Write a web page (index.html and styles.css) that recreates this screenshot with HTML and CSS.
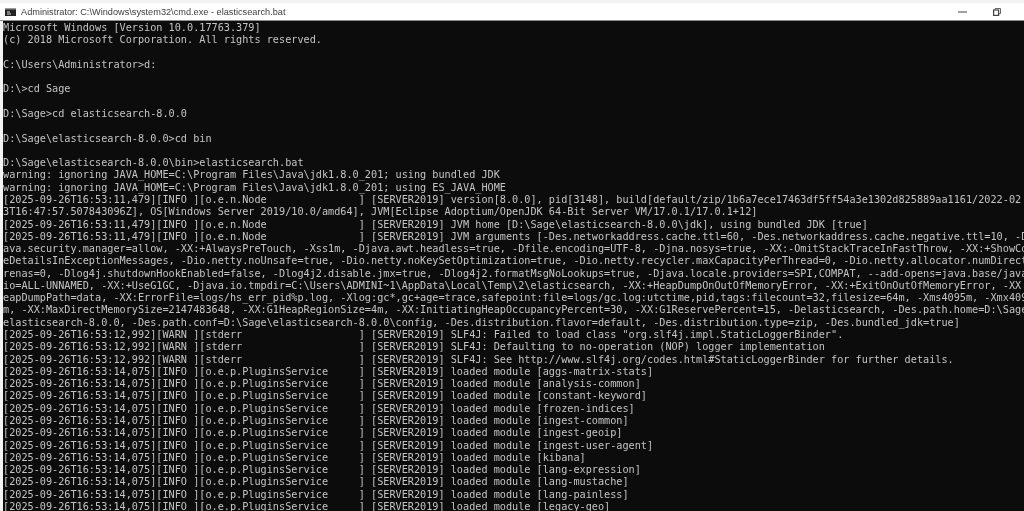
FILE: index.html
```html
<!DOCTYPE html>
<html lang="en">
<head>
<meta charset="utf-8">
<title>elasticsearch.bat</title>
<link rel="stylesheet" href="styles.css">
</head>
<body>
<div class="window">
  <header class="titlebar">
    <svg class="app-icon" width="11" height="8" viewBox="0 0 11 8"><rect width="11" height="8" fill="#222"/><rect width="11" height="1.5" fill="#9a9a9a"/><path d="M2 3.5h3v1H2zM2 5.5h4v1H2z" fill="#ddd"/></svg>
    <span class="title">Administrator: C:\Windows\system32\cmd.exe - elasticsearch.bat</span>
    <div class="controls">
      <span class="minimize"></span>
      <svg class="restore" width="8" height="8" viewBox="0 0 8 8"><path d="M2.2 1.8V.5h5.3v5.2H6" fill="none" stroke="#666" stroke-width="1"/><rect x=".6" y="2" width="5" height="5.4" fill="none" stroke="#444" stroke-width="1.2"/></svg>
    </div>
  </header>
  <pre class="console">Microsoft Windows [Version 10.0.17763.379]
(c) 2018 Microsoft Corporation. All rights reserved.

C:\Users\Administrator&gt;d:

D:\&gt;cd Sage

D:\Sage&gt;cd elasticsearch-8.0.0

D:\Sage\elasticsearch-8.0.0&gt;cd bin

D:\Sage\elasticsearch-8.0.0\bin&gt;elasticsearch.bat
warning: ignoring JAVA_HOME=C:\Program Files\Java\jdk1.8.0_201; using bundled JDK
warning: ignoring JAVA_HOME=C:\Program Files\Java\jdk1.8.0_201; using ES_JAVA_HOME
[2025-09-26T16:53:11,479][INFO ][o.e.n.Node               ] [SERVER2019] version[8.0.0], pid[3148], build[default/zip/1b6a7ece17463df5ff54a3e1302d825889aa1161/2022-02
3T16:47:57.507843096Z], OS[Windows Server 2019/10.0/amd64], JVM[Eclipse Adoptium/OpenJDK 64-Bit Server VM/17.0.1/17.0.1+12]
[2025-09-26T16:53:11,479][INFO ][o.e.n.Node               ] [SERVER2019] JVM home [D:\Sage\elasticsearch-8.0.0\jdk], using bundled JDK [true]
[2025-09-26T16:53:11,479][INFO ][o.e.n.Node               ] [SERVER2019] JVM arguments [-Des.networkaddress.cache.ttl=60, -Des.networkaddress.cache.negative.ttl=10, -D
ava.security.manager=allow, -XX:+AlwaysPreTouch, -Xss1m, -Djava.awt.headless=true, -Dfile.encoding=UTF-8, -Djna.nosys=true, -XX:-OmitStackTraceInFastThrow, -XX:+ShowCo
eDetailsInExceptionMessages, -Dio.netty.noUnsafe=true, -Dio.netty.noKeySetOptimization=true, -Dio.netty.recycler.maxCapacityPerThread=0, -Dio.netty.allocator.numDirect
renas=0, -Dlog4j.shutdownHookEnabled=false, -Dlog4j2.disable.jmx=true, -Dlog4j2.formatMsgNoLookups=true, -Djava.locale.providers=SPI,COMPAT, --add-opens=java.base/java
io=ALL-UNNAMED, -XX:+UseG1GC, -Djava.io.tmpdir=C:\Users\ADMINI~1\AppData\Local\Temp\2\elasticsearch, -XX:+HeapDumpOnOutOfMemoryError, -XX:+ExitOnOutOfMemoryError, -XX
eapDumpPath=data, -XX:ErrorFile=logs/hs_err_pid%p.log, -Xlog:gc*,gc+age=trace,safepoint:file=logs/gc.log:utctime,pid,tags:filecount=32,filesize=64m, -Xms4095m, -Xmx409
m, -XX:MaxDirectMemorySize=2147483648, -XX:G1HeapRegionSize=4m, -XX:InitiatingHeapOccupancyPercent=30, -XX:G1ReservePercent=15, -Delasticsearch, -Des.path.home=D:\Sage
elasticsearch-8.0.0, -Des.path.conf=D:\Sage\elasticsearch-8.0.0\config, -Des.distribution.flavor=default, -Des.distribution.type=zip, -Des.bundled_jdk=true]
[2025-09-26T16:53:12,992][WARN ][stderr                   ] [SERVER2019] SLF4J: Failed to load class "org.slf4j.impl.StaticLoggerBinder".
[2025-09-26T16:53:12,992][WARN ][stderr                   ] [SERVER2019] SLF4J: Defaulting to no-operation (NOP) logger implementation
[2025-09-26T16:53:12,992][WARN ][stderr                   ] [SERVER2019] SLF4J: See http://www.slf4j.org/codes.html#StaticLoggerBinder for further details.
[2025-09-26T16:53:14,075][INFO ][o.e.p.PluginsService     ] [SERVER2019] loaded module [aggs-matrix-stats]
[2025-09-26T16:53:14,075][INFO ][o.e.p.PluginsService     ] [SERVER2019] loaded module [analysis-common]
[2025-09-26T16:53:14,075][INFO ][o.e.p.PluginsService     ] [SERVER2019] loaded module [constant-keyword]
[2025-09-26T16:53:14,075][INFO ][o.e.p.PluginsService     ] [SERVER2019] loaded module [frozen-indices]
[2025-09-26T16:53:14,075][INFO ][o.e.p.PluginsService     ] [SERVER2019] loaded module [ingest-common]
[2025-09-26T16:53:14,075][INFO ][o.e.p.PluginsService     ] [SERVER2019] loaded module [ingest-geoip]
[2025-09-26T16:53:14,075][INFO ][o.e.p.PluginsService     ] [SERVER2019] loaded module [ingest-user-agent]
[2025-09-26T16:53:14,075][INFO ][o.e.p.PluginsService     ] [SERVER2019] loaded module [kibana]
[2025-09-26T16:53:14,075][INFO ][o.e.p.PluginsService     ] [SERVER2019] loaded module [lang-expression]
[2025-09-26T16:53:14,075][INFO ][o.e.p.PluginsService     ] [SERVER2019] loaded module [lang-mustache]
[2025-09-26T16:53:14,075][INFO ][o.e.p.PluginsService     ] [SERVER2019] loaded module [lang-painless]
[2025-09-26T16:53:14,075][INFO ][o.e.p.PluginsService     ] [SERVER2019] loaded module [legacy-geo]</pre>
</div>
</body>
</html>
```

FILE: styles.css
```css
html, body {
  margin: 0;
  height: 100%;
  overflow: hidden;
  background: #f5f5f5;
}

.window {
  display: flex;
  flex-direction: column;
  height: 511px;
  padding-top: 3px;
  box-sizing: border-box;
  background: #f3f3f3;
}

.titlebar {
  flex: none;
  display: flex;
  align-items: center;
  height: 17px;
  padding-left: 5px;
  background: #fff;
  border-bottom: 1px solid #8c8c8c;
  font: 9.2px "Liberation Sans", "Open Sans", sans-serif;
  color: #3c3c3c;
}

.app-icon {
  margin-right: 5px;
}

.title {
  white-space: nowrap;
  filter: blur(0.25px);
}

.controls {
  margin-left: auto;
  display: flex;
  align-items: center;
  gap: 26px;
  padding-right: 23px;
}

.minimize {
  width: 9px;
  height: 2px;
  background: #a0a0a0;
}

.console {
  flex: 1;
  margin: 0 0 0 3px;
  padding: 1px 0 0;
  overflow: hidden;
  background: #0c0c0c;
  color: #c4c4c4;
  font: 10.2px/12.28px "DejaVu Sans Mono", "Liberation Mono", monospace;
  white-space: pre;
  filter: blur(0.35px);
}
```
